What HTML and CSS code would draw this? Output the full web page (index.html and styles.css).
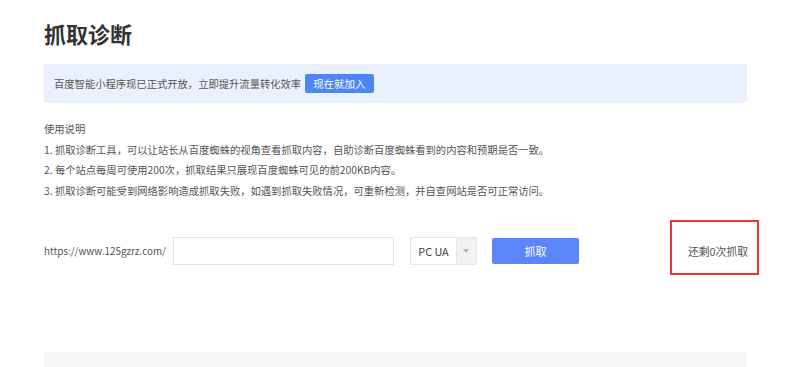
FILE: index.html
```html
<!DOCTYPE html>
<html lang="zh-CN">
<head>
    <meta charset="UTF-8">
    <meta name="viewport" content="width=device-width, initial-scale=1.0">
    <title>抓取诊断</title>
    <link rel="stylesheet" href="styles.css">
</head>
<body>
    <div class="page">
        <h1 class="title">抓取诊断</h1>
        <div class="notice">
            <span>百度智能小程序现已正式开放，立即提升流量转化效率</span>
            <a class="notice-btn" href="#">现在就加入</a>
        </div>
        <div class="guide">
            <p>使用说明</p>
            <p>1. 抓取诊断工具，可以让站长从百度蜘蛛的视角查看抓取内容，自助诊断百度蜘蛛看到的内容和预期是否一致。</p>
            <p>2. 每个站点每周可使用200次，抓取结果只展现百度蜘蛛可见的前200KB内容。</p>
            <p>3. 抓取诊断可能受到网络影响造成抓取失败，如遇到抓取失败情况，可重新检测，并自查网站是否可正常访问。</p>
        </div>
        <div class="fetch-row">
            <label class="site" for="path">https://www.125gzrz.com/</label>
            <input class="path-input" type="text" id="path">
            <div class="ua-select">
                <span class="ua-value">PC UA</span>
                <span class="ua-arrow"></span>
            </div>
            <button class="fetch-btn">抓取</button>
            <span class="remain">还剩0次抓取</span>
            <div class="mark"></div>
        </div>
        <div class="history"></div>
    </div>
</body>
</html>
```

FILE: styles.css
```css
body {
    margin: 0;
    font-family: "Microsoft YaHei", "Noto Sans CJK SC", sans-serif;
    color: #555;
    background: #fff;
}
.page {
    width: 703px;
    padding: 18px 0 0 44px;
}
.title {
    margin: 0;
    font-size: 22px;
    line-height: 30px;
    font-weight: bold;
    color: #333;
}
.notice {
    margin-top: 16px;
    height: 39px;
    padding-left: 10px;
    display: flex;
    align-items: center;
    background: #eaf1fd;
    font-size: 10.3px;
    color: #555;
}
.notice-btn {
    margin-left: 4px;
    height: 19px;
    line-height: 19px;
    padding: 0 8px;
    border-radius: 2px;
    background: #4e85f7;
    color: #fff;
    font-size: 10.5px;
    text-decoration: none;
}
.guide {
    margin-top: 16px;
    font-size: 10.3px;
    line-height: 20.5px;
    color: #555;
}
.guide p {
    margin: 0;
}
.fetch-row {
    position: relative;
    margin-top: 36px;
    display: flex;
    align-items: center;
    font-size: 10.8px;
}
.fetch-row > * {
    flex-shrink: 0;
}
.site {
    width: 129px;
    font-size: 9.9px;
    white-space: nowrap;
    color: #555;
}
.path-input {
    width: 221px;
    height: 28px;
    box-sizing: border-box;
    border: 1px solid #e3e3e3;
    outline: none;
}
.ua-select {
    margin-left: 16px;
    width: 67px;
    height: 28px;
    box-sizing: border-box;
    border: 1px solid #e6e6e6;
    display: flex;
}
.ua-value {
    flex: 1;
    text-align: center;
    line-height: 26px;
    color: #444;
}
.ua-arrow {
    width: 19px;
    background: #f2f2f2;
    border-left: 1px solid #e6e6e6;
    position: relative;
}
.ua-arrow::after {
    content: "";
    position: absolute;
    left: 6px;
    top: 11px;
    border: 3px solid transparent;
    border-top: 4px solid #b5b5b5;
}
.fetch-btn {
    margin-left: 15px;
    width: 87px;
    height: 26px;
    border: none;
    border-radius: 2px;
    background: #5a86fa;
    color: #fff;
    font-family: inherit;
    font-size: 11px;
}
.remain {
    margin-left: auto;
    margin-right: -1px;
    color: #555;
}
.mark {
    position: absolute;
    left: 626px;
    top: -17px;
    width: 89px;
    height: 55px;
    box-sizing: border-box;
    border: 2px solid #f23333;
}
.history {
    margin-top: 87px;
    height: 20px;
    background: #f7f7f7;
}
```
